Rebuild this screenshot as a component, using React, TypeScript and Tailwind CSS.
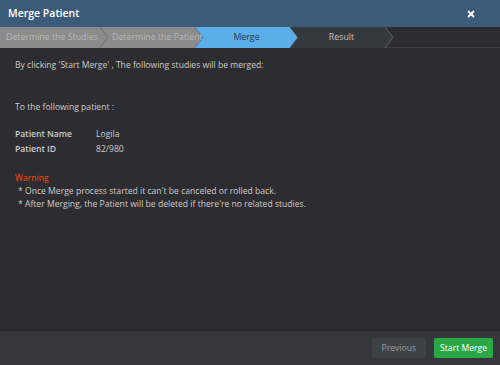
import { X } from "lucide-react";

const steps = [
  { label: "Determine the Studies", state: "done" },
  { label: "Determine the Patient", state: "done" },
  { label: "Merge", state: "active" },
  { label: "Result", state: "todo" },
];

function Step({ label, state, first }: { label: string; state: string; first: boolean }) {
  const bg = state === "active" ? "#5aaee8" : state === "done" ? "#8b8b8b" : "#35383c";
  const fg = state === "active" ? "text-[#2a3a4a]" : state === "done" ? "text-[#b8b8b8]" : "text-[#c4c4c4]";
  const align = state === "done" ? "justify-start" : "justify-center";
  const w = first ? 108 : 103;
  return (
    <div className={`relative h-full shrink-0 ${first ? "w-[108px]" : "-ml-[8px] w-[103px]"}`}>
      <svg className="absolute inset-0" width={w} height="21" viewBox={`0 0 ${w} 21`}>
        <polygon
          points={
            first
              ? `0,0 ${w - 8},0 ${w},10.5 ${w - 8},21 0,21`
              : `0,0 ${w - 8},0 ${w},10.5 ${w - 8},21 0,21 8,10.5`
          }
          fill={bg}
        />
        <polyline points={`${w - 8},0 ${w},10.5 ${w - 8},21`} fill="none" stroke="#5f6266" strokeWidth="1" />
      </svg>
      <div
        className={`relative flex h-full items-center overflow-hidden whitespace-nowrap text-[8.8px] ${fg} ${align} ${
          first ? "pl-[6px] pr-[10px]" : state === "done" ? "pl-[12px] pr-[14px]" : "pl-[12px] pr-[12px]"
        }`}
      >
        {label}
      </div>
    </div>
  );
}

export default function App() {
  return (
    <div
      className="flex h-[365px] w-[500px] flex-col bg-[#2c2c31] text-[8.6px] leading-[13px]"
      style={{ fontFamily: '"Open Sans", sans-serif' }}
    >
      <div className="flex h-[27px] shrink-0 items-center justify-between bg-[#3c5b78] pl-[8px] pr-[24px]">
        <span className="text-[10.5px] font-semibold text-white">Merge Patient</span>
        <X className="h-[10px] w-[10px] text-white" strokeWidth={4.5} />
      </div>
      <div className="flex h-[21px] shrink-0 border-b border-[#3a3b40] bg-[#2c2c31]">
        {steps.map((s, i) => (
          <Step key={s.label} label={s.label} state={s.state} first={i === 0} />
        ))}
      </div>
      <div className="flex-1 px-[15px] pt-[11px] text-[#cdcdcd]">
        <p>By clicking 'Start Merge' , The following studies will be merged:</p>
        <p className="mt-[29px]">To the following patient :</p>
        <div className="mt-[14px] grid grid-cols-[81px_1fr] gap-y-[2px]">
          <span className="font-semibold">Patient Name</span>
          <span>Logila</span>
          <span className="font-semibold">Patient ID</span>
          <span>82/980</span>
        </div>
        <p className="mt-[16px] text-[#ff4a12]">Warning</p>
        <p className="pl-[3px]">* Once Merge process started it can't be canceled or rolled back.</p>
        <p className="pl-[3px]">* After Merging, the Patient will be deleted if there're no related studies.</p>
      </div>
      <div className="flex h-[35px] shrink-0 items-center justify-end gap-[8px] border-t border-[#26262a] bg-[#36363c] pr-[7px]">
        <button className="h-[20px] rounded-[2px] bg-[#3d4146] px-[10px] text-[8.6px] text-[#9a9ea3]">Previous</button>
        <button className="h-[20px] rounded-[2px] bg-[#2aa845] px-[6px] text-[8.6px] text-white">Start Merge</button>
      </div>
    </div>
  );
}
